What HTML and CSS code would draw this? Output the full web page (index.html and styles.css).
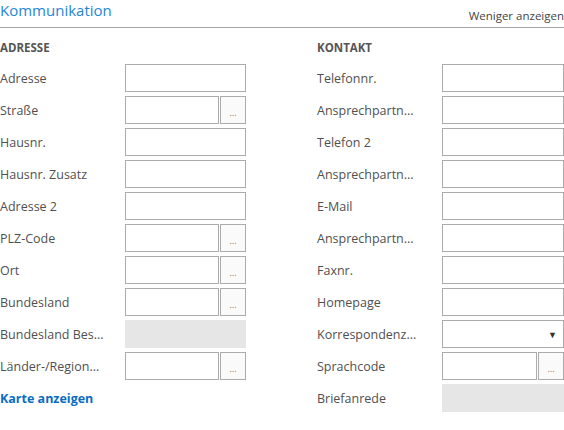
FILE: index.html
```html
<!DOCTYPE html>
<html lang="de">
<head>
<meta charset="utf-8">
<link rel="stylesheet" href="styles.css">
</head>
<body>
<div class="page">
  <header class="head">
    <h1 class="title">Kommunikation</h1>
    <span class="less">Weniger anzeigen</span>
  </header>
  <div class="cols">
    <section class="col">
      <h2 class="cap">ADRESSE</h2>
      <div class="row"><span class="lbl">Adresse</span><span class="inp"></span></div>
      <div class="row"><span class="lbl">Straße</span><span class="pair"><span class="inp"></span><span class="btn">...</span></span></div>
      <div class="row"><span class="lbl">Hausnr.</span><span class="inp"></span></div>
      <div class="row"><span class="lbl">Hausnr. Zusatz</span><span class="inp"></span></div>
      <div class="row"><span class="lbl">Adresse 2</span><span class="inp"></span></div>
      <div class="row"><span class="lbl">PLZ-Code</span><span class="pair"><span class="inp"></span><span class="btn">...</span></span></div>
      <div class="row"><span class="lbl">Ort</span><span class="pair"><span class="inp"></span><span class="btn">...</span></span></div>
      <div class="row"><span class="lbl">Bundesland</span><span class="pair"><span class="inp"></span><span class="btn">...</span></span></div>
      <div class="row"><span class="lbl">Bundesland Bes...</span><span class="inp dis"></span></div>
      <div class="row"><span class="lbl">Länder-/Region...</span><span class="pair"><span class="inp"></span><span class="btn">...</span></span></div>
      <div class="row"><a class="link">Karte anzeigen</a></div>
    </section>
    <section class="col">
      <h2 class="cap">KONTAKT</h2>
      <div class="row"><span class="lbl">Telefonnr.</span><span class="inp"></span></div>
      <div class="row"><span class="lbl">Ansprechpartn...</span><span class="inp"></span></div>
      <div class="row"><span class="lbl">Telefon 2</span><span class="inp"></span></div>
      <div class="row"><span class="lbl">Ansprechpartn...</span><span class="inp"></span></div>
      <div class="row"><span class="lbl">E-Mail</span><span class="inp"></span></div>
      <div class="row"><span class="lbl">Ansprechpartn...</span><span class="inp"></span></div>
      <div class="row"><span class="lbl">Faxnr.</span><span class="inp"></span></div>
      <div class="row"><span class="lbl">Homepage</span><span class="inp"></span></div>
      <div class="row"><span class="lbl">Korrespondenz...</span><span class="inp sel"><span class="arrow">▼</span></span></div>
      <div class="row"><span class="lbl">Sprachcode</span><span class="pair"><span class="inp"></span><span class="btn">...</span></span></div>
      <div class="row"><span class="lbl">Briefanrede</span><span class="inp dis"></span></div>
    </section>
  </div>
</div>
</body>
</html>
```
FILE: styles.css
```css
* { box-sizing: border-box; }
html, body { margin: 0; padding: 0; background: #fff; }
body {
  font-family: "Open Sans", "Noto Sans", sans-serif;
  color: #505050;
  font-size: 12px;
  width: 564px;
}
.head {
  display: flex;
  justify-content: space-between;
  align-items: flex-end;
  height: 28px;
  border-bottom: 1px solid #a6a6a6;
  padding-bottom: 4px;
}
.title {
  margin: 0;
  font-size: 15px;
  font-weight: 400;
  color: #1f86d4;
  line-height: 20px;
  position: relative;
  top: -3px;
}
.less {
  font-size: 11.5px;
  color: #444;
  line-height: 14px;
}
.cols {
  display: grid;
  grid-template-columns: 246px 247px;
  column-gap: 71px;
  padding-top: 11px;
}
.cap {
  margin: 0 0 7px;
  font-size: 11.5px;
  font-weight: 700;
  color: #555;
  line-height: 18px;
  height: 18px;
}
.row {
  display: flex;
  align-items: center;
  height: 28px;
  margin-bottom: 4px;
}
.lbl {
  width: 125px;
  flex: none;
  font-size: 12.5px;
  white-space: nowrap;
  color: #505050;
}
.inp {
  flex: 1;
  height: 28px;
  border: 1px solid #ababab;
  background: #fff;
}
.inp.dis {
  background: #e6e6e6;
  border-color: #e6e6e6;
}
.inp.sel {
  display: flex;
  justify-content: flex-end;
  align-items: center;
  padding-right: 6px;
}
.arrow {
  font-size: 9px;
  color: #333;
}
.pair {
  flex: 1;
  display: flex;
  gap: 1px;
  height: 28px;
}
.btn {
  width: 26px;
  flex: none;
  height: 28px;
  border: 1px solid #ababab;
  background: #fafafa;
  color: #777;
  font-size: 9px;
  display: flex;
  justify-content: center;
  align-items: flex-end;
  padding-bottom: 6px;
  line-height: 9px;
}
.link {
  font-weight: 700;
  color: #0b6cc4;
  font-size: 12.5px;
  text-decoration: none;
}
```
